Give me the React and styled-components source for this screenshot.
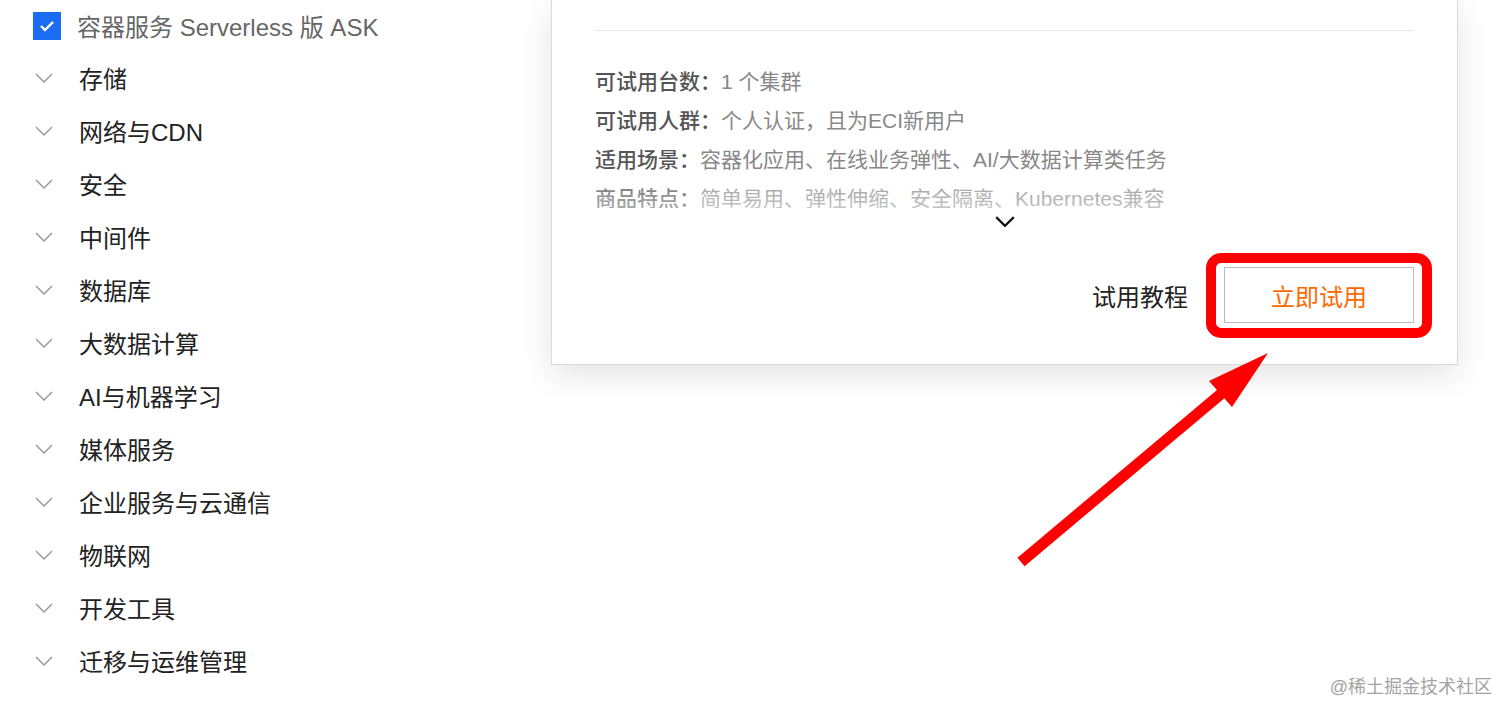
import React from "react";
import styled, { createGlobalStyle } from "styled-components";

const GlobalStyle = createGlobalStyle`
  html, body {
    margin: 0;
    padding: 0;
    background: #fff;
    overflow: hidden;
  }
  body {
    font-family: "Liberation Sans", "Noto Sans CJK SC", sans-serif;
  }
`;

const Page = styled.div`
  position: relative;
  width: 1512px;
  height: 715px;
  display: flex;
  overflow: hidden;
`;

const Sidebar = styled.ul`
  list-style: none;
  margin: 0;
  padding: 0 0 0 33px;
  width: 551px;
  box-sizing: border-box;
  flex-shrink: 0;
`;

const Row = styled.li`
  display: flex;
  align-items: center;
  height: ${(p) => (p.$first ? "51px" : "53px")};
  font-size: 24px;
  color: ${(p) => (p.$checked ? "#666" : "#222")};
`;

const Checkbox = styled.span`
  width: 28px;
  height: 28px;
  background: #1a6cf0;
  display: flex;
  align-items: center;
  justify-content: center;
  margin-right: 16px;
  flex-shrink: 0;
`;

const ChevronSlot = styled.span`
  width: 46px;
  display: flex;
  align-items: center;
  padding-left: 2px;
  box-sizing: border-box;
  flex-shrink: 0;
`;

const Card = styled.div`
  width: 907px;
  height: 365px;
  flex-shrink: 0;
  box-sizing: border-box;
  border: 1px solid #d9d9d9;
  border-top: none;
  background: #fff;
  box-shadow: 0 10px 30px rgba(0, 0, 0, 0.11);
  padding: 30px 43px 0 43px;
  display: flex;
  flex-direction: column;
`;

const Divider = styled.div`
  height: 1px;
  background: #e6e6e6;
`;

const InfoBox = styled.div`
  position: relative;
  margin-top: 29px;
  height: 148px;
  overflow: hidden;
  &::after {
    content: "";
    position: absolute;
    left: 0;
    right: 0;
    bottom: 0;
    height: 30px;
    background: linear-gradient(rgba(255, 255, 255, 0.15), rgba(255, 255, 255, 0.5));
  }
`;

const InfoRow = styled.div`
  display: flex;
  align-items: center;
  height: 39px;
  font-size: 21px;
  white-space: nowrap;
`;

const Label = styled.span`
  color: #555;
  font-weight: 500;
`;

const Value = styled.span`
  color: #888;
`;

const Toggle = styled.div`
  display: flex;
  justify-content: center;
  margin-top: 8px;
  height: 14px;
`;

const Footer = styled.div`
  display: flex;
  align-items: center;
  justify-content: flex-end;
  margin-top: 37px;
  gap: 36px;
`;

const TextLink = styled.span`
  font-size: 24px;
  color: #222;
`;

const Highlight = styled.div`
  position: relative;
`;

const Ring = styled.div`
  position: absolute;
  left: -18px;
  top: -14px;
  right: -18px;
  bottom: -15px;
  border: 10px solid #ff0000;
  border-radius: 15px;
  pointer-events: none;
`;

const TryButton = styled.button`
  width: 190px;
  height: 56px;
  box-sizing: border-box;
  border: 1px solid #b8bcc4;
  background: #fff;
  color: #ff6a00;
  font-family: inherit;
  font-size: 24px;
  display: flex;
  align-items: center;
  justify-content: center;
  cursor: pointer;
`;

const Arrow = styled.svg`
  position: absolute;
  left: 0;
  top: 0;
  pointer-events: none;
`;

const Watermark = styled.div`
  position: absolute;
  right: 20px;
  bottom: 17px;
  font-size: 18px;
  color: #a3a3a3;
`;

const Chevron = ({ color = "#9a9a9a", w = 18, h = 10, sw = 1.5 }) => (
  <svg width={w} height={h} viewBox="0 0 18 10" fill="none">
    <path d="M1 1 L9 9 L17 1" stroke={color} strokeWidth={sw} />
  </svg>
);

const categories = [
  "存储",
  "网络与CDN",
  "安全",
  "中间件",
  "数据库",
  "大数据计算",
  "AI与机器学习",
  "媒体服务",
  "企业服务与云通信",
  "物联网",
  "开发工具",
  "迁移与运维管理",
];

const info = [
  ["可试用台数：", "1 个集群"],
  ["可试用人群：", "个人认证，且为ECI新用户"],
  ["适用场景：", "容器化应用、在线业务弹性、AI/大数据计算类任务"],
  ["商品特点：", "简单易用、弹性伸缩、安全隔离、Kubernetes兼容"],
];

const App = () => (
  <Page>
    <GlobalStyle />
    <Sidebar>
      <Row $first $checked>
        <Checkbox>
          <svg width="16" height="12" viewBox="0 0 16 12" fill="none">
            <path d="M2 6 L6 10 L14 2" stroke="#fff" strokeWidth="2.4" />
          </svg>
        </Checkbox>
        容器服务 Serverless 版 ASK
      </Row>
      {categories.map((c) => (
        <Row key={c}>
          <ChevronSlot>
            <Chevron />
          </ChevronSlot>
          {c}
        </Row>
      ))}
    </Sidebar>
    <Card>
      <Divider />
      <InfoBox>
        {info.map(([l, v]) => (
          <InfoRow key={l}>
            <Label>{l}</Label>
            <Value>{v}</Value>
          </InfoRow>
        ))}
      </InfoBox>
      <Toggle>
        <Chevron color="#111" w={20} h={11} sw={2} />
      </Toggle>
      <Footer>
        <TextLink>试用教程</TextLink>
        <Highlight>
          <TryButton>立即试用</TryButton>
          <Ring />
        </Highlight>
      </Footer>
    </Card>
    <Arrow width="1512" height="715" viewBox="0 0 1512 715">
      <line x1="1021" y1="562" x2="1228" y2="388" stroke="#ff0000" strokeWidth="11" />
      <polygon points="1268,353 1209,381 1232,407" fill="#ff0000" />
    </Arrow>
    <Watermark>@稀土掘金技术社区</Watermark>
  </Page>
);

export default App;
